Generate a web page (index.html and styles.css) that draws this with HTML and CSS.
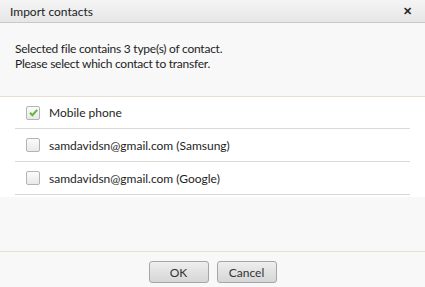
FILE: index.html
```html
<!DOCTYPE html>
<html>
<head>
<meta charset="utf-8">
<link rel="stylesheet" href="styles.css">
</head>
<body>
<div class="dialog">
  <div class="titlebar">
    <span class="title">Import contacts</span>
    <span class="close">&#x2715;</span>
  </div>
  <div class="message">
    <div>Selected file contains 3 type(s) of contact.</div>
    <div>Please select which contact to transfer.</div>
  </div>
  <div class="list">
    <div class="row first">
      <span class="cb checked"><svg width="11" height="11" viewBox="0 0 11 11"><path d="M2 5.8 L4.4 8.2 L9.2 2.8" fill="none" stroke="#5db83a" stroke-width="2"/></svg></span>
      <span class="label">Mobile phone</span>
    </div>
    <div class="row">
      <span class="cb"></span>
      <span class="label">samdavidsn@gmail.com (Samsung)</span>
    </div>
    <div class="row">
      <span class="cb"></span>
      <span class="label">samdavidsn@gmail.com (Google)</span>
    </div>
  </div>
  <div class="spacer"></div>
  <div class="footer">
    <button class="btn">OK</button>
    <button class="btn">Cancel</button>
  </div>
</div>
</body>
</html>
```
FILE: styles.css
```css
html, body { margin: 0; padding: 0; }
body { font-family: Lato, "Open Sans", sans-serif; font-size: 12px; color: #1e1e1e; background: #f8f8f8; }
.dialog { width: 425px; height: 287px; display: flex; flex-direction: column; background: #f8f8f8; }
.titlebar { height: 22px; border-bottom: 1px solid #c9c9c9; background: linear-gradient(#f5f5f5, #e6e6e6); display: flex; align-items: center; justify-content: space-between; padding: 0 13px 0 10px; }
.title { font-size: 12px; color: #222; }
.close { font-size: 11px; font-weight: bold; color: #2a2a2a; }
.message { height: 73px; box-sizing: border-box; padding: 18px 15px 0; line-height: 15px; letter-spacing: -0.25px; }
.list { border-top: 1px solid #e7e0d0; background: #fff; padding: 0 15px 2px; }
.row { height: 32px; border-bottom: 1px solid #d9d9d9; display: flex; align-items: center; padding-left: 11px; }
.row.first { height: 31px; }
.cb { width: 12px; height: 12px; border: 1px solid #b4b4b4; border-radius: 2px; background: linear-gradient(#fbfbfb, #e9e9e9); display: flex; align-items: center; justify-content: center; margin-right: 9px; }
.label { color: #1e1e1e; }
.spacer { flex: 1; }
.footer { height: 36px; border-top: 1px solid #e7e0d0; display: flex; justify-content: center; gap: 8px; padding-top: 9px; box-sizing: border-box; }
.btn { width: 60px; height: 22px; border: 1px solid #a6a6a6; border-radius: 3px; background: linear-gradient(#eeeeee, #d6d6d6); font-family: Lato, "Open Sans", sans-serif; font-size: 12px; color: #333; padding: 0; }
```
